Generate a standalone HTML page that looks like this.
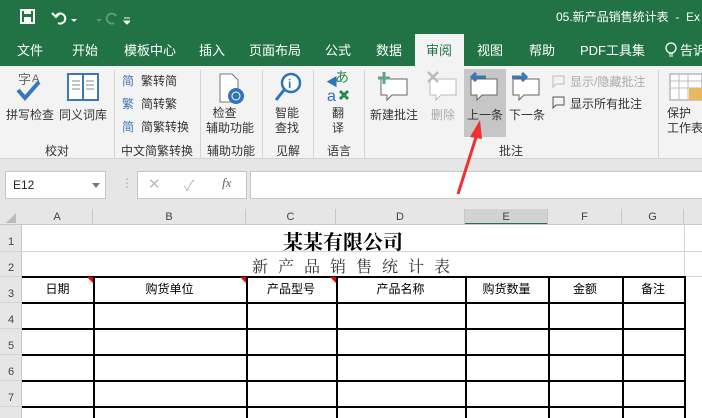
<!DOCTYPE html><html><head><meta charset="utf-8"><style>
*{margin:0;padding:0;box-sizing:border-box}
body{width:702px;height:418px;overflow:hidden;position:relative;font-family:"Liberation Sans","Noto Sans CJK SC",sans-serif;font-size:12px;color:#222;background:#e6e6e6}
.a{position:absolute}
.t{white-space:nowrap}
.green{background:#217346;color:#fff}
.tab{position:absolute;top:40px;font-size:13px;color:#fff;white-space:nowrap}
.lbl{position:absolute;font-size:12px;color:#333;white-space:nowrap}
.sep{position:absolute;top:70px;width:1px;height:88px;background:#d4d4d4}
.vl{position:absolute;background:#000;width:1.5px}
.hl{position:absolute;background:#000;height:1.5px}
.gv{position:absolute;background:#d4d4d4;width:1px}
.gh{position:absolute;background:#d4d4d4;height:1px}
.rn{position:absolute;left:0;width:22px;text-align:center;font-size:11px;color:#444}
.ch{position:absolute;top:209px;height:16px;text-align:center;font-size:11px;color:#444;border-right:1px solid #c8c8c8;line-height:16px}
.hc{position:absolute;top:276px;height:26px;line-height:26px;text-align:center;font-size:12px;color:#000}
</style></head><body>
<div class="a green" style="left:0;top:0;width:702px;height:66px"></div>
<svg class="a" style="left:20px;top:8px" width="110" height="18">
<rect x="1" y="2" width="13" height="13" fill="none" stroke="#fff" stroke-width="2"/><rect x="4" y="2" width="7" height="4" fill="#fff"/><rect x="4" y="9" width="7" height="6" fill="#fff"/>
<path d="M36 8 a5 5 0 1 1 2 7" stroke="#fff" stroke-width="2" fill="none"/><path d="M32 5 l4 4 l4 -4" stroke="#fff" stroke-width="2" fill="none"/>
<path d="M51 11 l3 3 l3-3z" fill="#fff"/>
<path d="M96 8 a5 5 0 1 0 -2 7" stroke="#5d9a78" stroke-width="2" fill="none"/><path d="M76 11 l3 3 l3-3z" fill="#5d9a78"/>
<path d="M104 10 h6 M104 13 l3 3 l3 -3z" stroke="#fff" fill="#fff"/>
</svg>
<div class="a t" style="left:556px;top:8px;color:#fff;font-size:12px">05.新产品销售统计表 &nbsp;- &nbsp;Ex</div>
<div class="tab" style="left:17px">文件</div>
<div class="tab" style="left:72px">开始</div>
<div class="tab" style="left:124px">模板中心</div>
<div class="tab" style="left:199px">插入</div>
<div class="tab" style="left:249px">页面布局</div>
<div class="tab" style="left:325px">公式</div>
<div class="tab" style="left:376px">数据</div>
<div class="a" style="left:415px;top:34px;width:49px;height:33px;background:#f3f3f3"></div>
<div class="tab" style="left:426px;color:#217346">审阅</div>
<div class="tab" style="left:477px">视图</div>
<div class="tab" style="left:529px">帮助</div>
<div class="tab" style="left:580px">PDF工具集</div>
<svg class="a" style="left:665px;top:42px" width="12" height="18"><circle cx="6" cy="6" r="5" fill="none" stroke="#fff" stroke-width="1.3"/><path d="M4 12 h4 M4 14 h4" stroke="#fff"/></svg>
<div class="tab" style="left:680px">告诉</div>
<div class="a" style="left:0;top:66px;width:702px;height:93px;background:#f3f3f3;border-bottom:1px solid #d4d4d4"></div>
<div class="a" style="left:464px;top:69px;width:42px;height:68px;background:#c6c6c6"></div>
<svg class="a" style="left:0;top:66px" width="702" height="60">
<text x="18" y="18" font-size="13" fill="#666" font-family="Noto Sans CJK SC">字</text><text x="32" y="16" font-size="11" fill="#666">A</text>
<path d="M18 24 l7 8 l14 -16" stroke="#3a78b8" stroke-width="4" fill="none"/>
<rect x="68" y="8" width="30" height="26" fill="#fff" stroke="#3a78b8" stroke-width="2"/><line x1="83" y1="8" x2="83" y2="34" stroke="#3a78b8" stroke-width="2"/>
<g stroke="#888"><line x1="72" y1="15" x2="80" y2="15"/><line x1="72" y1="19" x2="80" y2="19"/><line x1="72" y1="23" x2="80" y2="23"/><line x1="86" y1="15" x2="94" y2="15"/><line x1="86" y1="19" x2="94" y2="19"/><line x1="86" y1="23" x2="94" y2="23"/></g>
<path d="M220 8 h12 l6 6 v22 h-18z" fill="#fff" stroke="#777"/><circle cx="236" cy="30" r="8" fill="#2e75b6"/><circle cx="236" cy="30" r="4" fill="none" stroke="#fff"/>
<circle cx="291" cy="17" r="9" fill="#fff" stroke="#2e75b6" stroke-width="2.5"/><text x="288" y="22" font-size="12" fill="#2e75b6" font-weight="bold">i</text><line x1="284" y1="24" x2="276" y2="34" stroke="#2e75b6" stroke-width="3"/>
<text x="326" y="20" font-size="12" fill="#2e75b6">◀</text><text x="335" y="16" font-size="14" fill="#2a8a4a" font-family="Noto Sans CJK JP">あ</text><text x="327" y="35" font-size="16" fill="#2e75b6">a</text><path d="M340 25 l8 8 M348 25 l-8 8" stroke="#2a8a4a" stroke-width="3"/>
<path d="M381 13 h26 v16 h-15 l-5 5 v-5 h-6z" fill="#fff" stroke="#666"/><path d="M384 6 v12 M378 12 h12" stroke="#5ea583" stroke-width="3"/>
<path d="M430 13 h26 v16 h-15 l-5 5 v-5 h-6z" fill="#fff" stroke="#bbb"/><path d="M428 6 l10 10 M438 6 l-10 10" stroke="#bbb" stroke-width="2.5"/>
<path d="M471 13 h26 v16 h-15 l-5 5 v-5 h-6z" fill="#fff" stroke="#666"/><path d="M472 11 h14 M476 7 l-4 4 l4 4" stroke="#3a78b8" stroke-width="3" fill="none"/>
<path d="M513 13 h26 v16 h-15 l-5 5 v-5 h-6z" fill="#fff" stroke="#666"/><path d="M512 11 h14 M522 7 l4 4 l-4 4" stroke="#3a78b8" stroke-width="3" fill="none"/>
<path d="M553 10 h11 v8 h-8 l-3 3z" fill="none" stroke="#bbb"/><path d="M553 31 h11 v8 h-8 l-3 3z" fill="none" stroke="#555"/>
<rect x="670" y="8" width="32" height="26" fill="#fff" stroke="#999"/><g stroke="#bbb"><line x1="670" y1="15" x2="702" y2="15"/><line x1="670" y1="22" x2="702" y2="22"/><line x1="679" y1="8" x2="679" y2="34"/><line x1="688" y1="8" x2="688" y2="34"/></g><rect x="689" y="22" width="13" height="12" fill="#e8b860"/>
</svg>
<div class="lbl" style="left:122px;top:72px;color:#3a78b8">简</div><div class="lbl" style="left:141px;top:72px">繁转简</div>
<div class="lbl" style="left:122px;top:95px;color:#3a78b8">繁</div><div class="lbl" style="left:141px;top:95px">简转繁</div>
<div class="lbl" style="left:122px;top:118px;color:#3a78b8">简</div><div class="lbl" style="left:141px;top:118px">简繁转换</div>
<div class="lbl" style="left:570px;top:73px;color:#aaa">显示/隐藏批注</div>
<div class="lbl" style="left:570px;top:95px">显示所有批注</div>
<div class="lbl" style="left:6px;top:106px">拼写检查</div><div class="lbl" style="left:59px;top:106px">同义词库</div>
<div class="lbl" style="left:206px;top:106px;line-height:15px">&nbsp;&nbsp;检查<br>辅助功能</div>
<div class="lbl" style="left:275px;top:106px;line-height:15px">智能<br>查找</div>
<div class="lbl" style="left:332px;top:106px;line-height:15px">翻<br>译</div>
<div class="lbl" style="left:370px;top:106px">新建批注</div><div class="lbl" style="left:431px;top:106px;color:#aaa">删除</div>
<div class="lbl" style="left:467px;top:106px">上一条</div><div class="lbl" style="left:509px;top:106px">下一条</div>
<div class="lbl" style="left:667px;top:106px;line-height:15px">保护<br>工作表</div>
<div class="lbl" style="left:45px;top:142px">校对</div>
<div class="lbl" style="left:121px;top:142px">中文简繁转换</div>
<div class="lbl" style="left:207px;top:142px">辅助功能</div>
<div class="lbl" style="left:276px;top:142px">见解</div>
<div class="lbl" style="left:327px;top:142px">语言</div>
<div class="lbl" style="left:499px;top:142px">批注</div>
<div class="sep" style="left:114px"></div><div class="sep" style="left:200px"></div><div class="sep" style="left:262px"></div><div class="sep" style="left:313px"></div><div class="sep" style="left:364px"></div><div class="sep" style="left:658px"></div>
<div class="a" style="left:5px;top:171px;width:101px;height:28px;background:#fff;border:1px solid #c6c6c6;padding:6px 0 0 7px;font-size:12px">E12</div>
<div class="a" style="left:92px;top:183px;border:4px solid transparent;border-top:5px solid #777"></div>
<div class="a" style="left:121px;top:176px;color:#aaa;font-size:12px">⋮</div>
<div class="a" style="left:137px;top:171px;width:110px;height:28px;background:#fff;border:1px solid #c6c6c6"></div>
<div class="a" style="left:148px;top:175px;color:#bbb;font-size:15px">✕</div>
<div class="a" style="left:184px;top:175px;color:#bbb;font-size:15px">✓</div>
<div class="a" style="left:222px;top:175px;color:#666;font-size:13px;font-style:italic;font-family:'Liberation Serif',serif">fx</div>
<div class="a" style="left:250px;top:171px;width:460px;height:28px;background:#fff;border:1px solid #c6c6c6"></div>
<div class="a" style="left:0;top:225px;width:702px;height:193px;background:#fff"></div>
<div class="a" style="left:0;top:225px;width:22px;height:193px;background:#e6e6e6;border-right:1px solid #c8c8c8"></div>
<div class="a" style="left:6px;top:213px;border-left:10px solid transparent;border-bottom:10px solid #bbb"></div>
<div class="ch" style="left:22px;width:71px">A</div><div class="ch" style="left:93px;width:153px">B</div><div class="ch" style="left:246px;width:90px">C</div><div class="ch" style="left:336px;width:129px">D</div>
<div class="ch" style="left:465px;width:83px;background:#d2d2d2;border-bottom:2px solid #217346">E</div><div class="ch" style="left:548px;width:74px">F</div><div class="ch" style="left:622px;width:62px">G</div>
<div class="a" style="left:0;top:224px;width:702px;height:1px;background:#c8c8c8"></div>
<div class="rn" style="top:236px">1</div><div class="rn" style="top:262px">2</div><div class="rn" style="top:288px">3</div><div class="rn" style="top:314px">4</div><div class="rn" style="top:340px">5</div><div class="rn" style="top:366px">6</div><div class="rn" style="top:392px">7</div>
<div class="gh" style="left:0;top:251px;width:702px"></div><div class="gh" style="left:0;top:276px;width:702px"></div>
<div class="gv" style="left:684px;top:225px;height:193px"></div>
<div class="gh" style="left:0;top:302px;width:22px"></div><div class="gh" style="left:0;top:328px;width:22px"></div><div class="gh" style="left:0;top:354px;width:22px"></div><div class="gh" style="left:0;top:380px;width:22px"></div><div class="gh" style="left:0;top:406px;width:22px"></div>
<div class="a t" style="left:283px;top:226px;font-size:20px;font-weight:bold;color:#000;font-family:'Noto Serif CJK SC',serif">某某有限公司</div>
<div class="a t" style="left:252px;top:254px;font-size:16px;color:#333;letter-spacing:10px;font-family:'Noto Serif CJK SC',serif">新产品销售统计表</div>
<div class="hl" style="left:22px;top:276px;width:663px"></div>
<div class="hl" style="left:22px;top:302px;width:663px"></div><div class="hl" style="left:22px;top:328px;width:663px"></div><div class="hl" style="left:22px;top:354px;width:663px"></div><div class="hl" style="left:22px;top:380px;width:663px"></div><div class="hl" style="left:22px;top:406px;width:663px"></div>
<div class="vl" style="left:93px;top:276px;height:142px"></div><div class="vl" style="left:246px;top:276px;height:142px"></div><div class="vl" style="left:336px;top:276px;height:142px"></div><div class="vl" style="left:465px;top:276px;height:142px"></div><div class="vl" style="left:548px;top:276px;height:142px"></div><div class="vl" style="left:622px;top:276px;height:142px"></div><div class="vl" style="left:684px;top:276px;height:142px"></div>
<div class="hc" style="left:22px;width:71px">日期</div><div class="hc" style="left:93px;width:153px">购货单位</div><div class="hc" style="left:246px;width:90px">产品型号</div><div class="hc" style="left:336px;width:129px">产品名称</div><div class="hc" style="left:465px;width:83px">购货数量</div><div class="hc" style="left:548px;width:74px">金额</div><div class="hc" style="left:622px;width:62px">备注</div>
<div class="a" style="left:87px;top:277px;border-left:6px solid transparent;border-top:6px solid #e00"></div>
<div class="a" style="left:240px;top:277px;border-left:6px solid transparent;border-top:6px solid #e00"></div>
<div class="a" style="left:330px;top:277px;border-left:6px solid transparent;border-top:6px solid #e00"></div>
<svg class="a" style="left:440px;top:110px" width="60" height="90"><path d="M18 84 L37 24" stroke="#f03030" stroke-width="3"/><path d="M40 10 L30 27 L42 29z" fill="#f03030"/></svg>
</body></html>
